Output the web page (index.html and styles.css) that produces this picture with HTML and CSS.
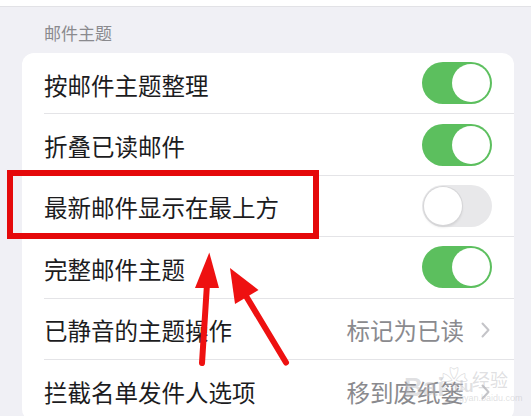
FILE: index.html
```html
<!DOCTYPE html>
<html lang="zh-CN">
<head>
<meta charset="utf-8">
<title>邮件主题</title>
<link rel="stylesheet" href="styles.css">
</head>
<body>
<div class="top-strip"></div>
<section class="section">
  <div class="section-title">邮件主题</div>
  <div class="card">
    <div class="row"><span class="label">按邮件主题整理</span><span class="toggle on"><span class="knob"></span></span></div>
    <div class="row"><span class="label">折叠已读邮件</span><span class="toggle on"><span class="knob"></span></span></div>
    <div class="row"><span class="label">最新邮件显示在最上方</span><span class="toggle off"><span class="knob"></span></span></div>
    <div class="row"><span class="label">完整邮件主题</span><span class="toggle on"><span class="knob"></span></span></div>
    <div class="row"><span class="label">已静音的主题操作</span><span class="value">标记为已读<svg class="chev" width="9" height="16" viewBox="0 0 9 16"><polyline points="1.5,1.5 7.5,8 1.5,14.5" fill="none" stroke="#c4c4c8" stroke-width="2" stroke-linecap="round" stroke-linejoin="round"/></svg></span></div>
    <div class="row"><span class="label">拦截名单发件人选项</span><span class="value">移到废纸篓<svg class="chev" width="9" height="16" viewBox="0 0 9 16"><polyline points="1.5,1.5 7.5,8 1.5,14.5" fill="none" stroke="#c4c4c8" stroke-width="2" stroke-linecap="round" stroke-linejoin="round"/></svg></span></div>
  </div>
</section>
<div class="highlight"></div>
<svg class="arrows" width="531" height="416" viewBox="0 0 531 416">
  <line x1="202" y1="363" x2="207" y2="284" stroke="#ee1111" stroke-width="6" stroke-linecap="round"/>
  <polygon points="209.3,252.5 195,288 219,288" fill="#ee1111"/>
  <line x1="286" y1="362.5" x2="246" y2="296" stroke="#ee1111" stroke-width="6" stroke-linecap="round"/>
  <polygon points="230,268 235,304 258.5,290" fill="#ee1111"/>
</svg>
<div class="watermark"><span class="wm-bai">Bai</span><span class="wm-paw">&#x2740;</span><span class="wm-du">du</span><span class="wm-jy">经验</span><span class="wm-url">jingyan.baidu.com</span></div>
</body>
</html>
```
FILE: styles.css
```css
html, body {
  margin: 0;
  padding: 0;
}
body {
  width: 531px;
  height: 416px;
  overflow: hidden;
  background: #f0f0f5;
  font-family: "Noto Sans CJK SC", "Noto Sans", sans-serif;
  color: #1c1c1e;
  position: relative;
}
.top-strip {
  height: 6px;
  background: #ffffff;
  border-bottom: 1px solid #e2e2e6;
}
.section {
  padding: 0 17px 0 22px;
}
.section-title {
  padding: 14px 0 8px 22px;
  font-size: 17px;
  line-height: 24px;
  color: #8a8a8e;
}
.card {
  background: #ffffff;
  border-radius: 12px;
  padding-left: 22px;
  overflow: hidden;
}
.row {
  box-sizing: border-box;
  height: 61.4px;
  display: flex;
  align-items: center;
  justify-content: space-between;
  padding-right: 22px;
  border-bottom: 1px solid #e4e4e7;
}
.row:last-child {
  border-bottom: none;
}
.label {
  font-size: 23.5px;
  line-height: 30px;
  padding-top: 3px;
}
.value {
  display: flex;
  align-items: center;
  gap: 17px;
  font-size: 23.5px;
  line-height: 30px;
  padding-top: 3px;
  color: #8a8a8e;
}
.chev {
  display: block;
  margin-right: 2px;
}
.toggle {
  box-sizing: border-box;
  width: 70px;
  height: 42px;
  border-radius: 21px;
  display: flex;
  align-items: center;
  padding: 2px;
}
.toggle.on {
  background: #5cbf5e;
  justify-content: flex-end;
}
.toggle.off {
  background: #e8e8ea;
  justify-content: flex-start;
}
.knob {
  width: 38px;
  height: 38px;
  border-radius: 50%;
  background: #ffffff;
}
.toggle.off .knob {
  box-shadow: 0 0 0 1px #d6d6d8, 0 2px 3px rgba(0,0,0,0.12);
}
.highlight {
  position: absolute;
  left: 7px;
  top: 170px;
  width: 312px;
  height: 69px;
  box-sizing: border-box;
  border: 6px solid #e5090b;
}
.arrows {
  position: absolute;
  left: 0;
  top: 0;
}
.watermark {
  position: absolute;
  left: 404px;
  top: 360px;
  width: 110px;
  height: 44px;
  color: rgba(185,185,190,0.45);
  font-family: "Liberation Sans", sans-serif;
}
.wm-bai {
  position: absolute;
  left: 0;
  top: 12px;
  font-size: 26px;
  font-weight: bold;
}
.wm-paw {
  position: absolute;
  left: 36px;
  top: 0;
  font-size: 28px;
}
.wm-du {
  position: absolute;
  left: 50px;
  top: 18px;
  font-size: 16px;
  font-weight: bold;
}
.wm-jy {
  position: absolute;
  left: 68px;
  top: 6px;
  font-size: 18px;
  font-family: "Noto Sans CJK SC", sans-serif;
}
.wm-url {
  position: absolute;
  left: 46px;
  top: 33px;
  font-size: 9px;
}
```
